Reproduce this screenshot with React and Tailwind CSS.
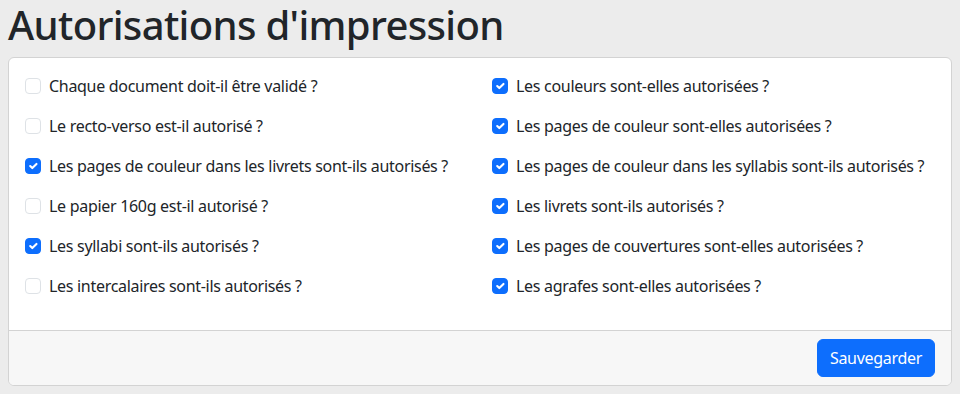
const leftItems = [
  { label: "Chaque document doit-il être validé ?", checked: false },
  { label: "Le recto-verso est-il autorisé ?", checked: false },
  { label: "Les pages de couleur dans les livrets sont-ils autorisés ?", checked: true },
  { label: "Le papier 160g est-il autorisé ?", checked: false },
  { label: "Les syllabi sont-ils autorisés ?", checked: true },
  { label: "Les intercalaires sont-ils autorisés ?", checked: false },
];

const rightItems = [
  { label: "Les couleurs sont-elles autorisées ?", checked: true },
  { label: "Les pages de couleur sont-elles autorisées ?", checked: true },
  { label: "Les pages de couleur dans les syllabis sont-ils autorisés ?", checked: true },
  { label: "Les livrets sont-ils autorisés ?", checked: true },
  { label: "Les pages de couvertures sont-elles autorisées ?", checked: true },
  { label: "Les agrafes sont-elles autorisées ?", checked: true },
];

// Bootstrap-looking checkbox row
const CheckRow = ({ label, checked }) => (
  <label className="flex items-start mb-4 leading-6 text-[16px] tracking-[-0.3px] text-[#212529] whitespace-nowrap">
    <span
      className={
        checked
          ? "mt-1 mr-2 w-4 h-4 shrink-0 rounded-[4px] bg-[#0d6efd] border border-[#0d6efd] flex items-center justify-center"
          : "mt-1 mr-2 w-4 h-4 shrink-0 rounded-[4px] bg-white border border-[#dee2e6]"
      }
    >
      {checked && (
        <svg viewBox="0 0 20 20" className="w-4 h-4">
          <path d="m6 10 3 3 6-6" fill="none" stroke="#fff" strokeWidth="3" strokeLinecap="round" strokeLinejoin="round" />
        </svg>
      )}
    </span>
    <span>{label}</span>
  </label>
);

export default function App() {
  return (
    <div className="min-h-screen bg-[#ececec] px-2 pt-px" style={{ fontFamily: '"Noto Sans", sans-serif' }}>
      {/* Title */}
      <h1 className="text-[40px] leading-[48px] font-medium tracking-[-0.65px] text-[#212529] mb-2">Autorisations d'impression</h1>

      {/* Settings card */}
      <div className="bg-white border border-[#d3d3d3] rounded-md overflow-hidden">
        <div className="p-4">
          <div className="grid grid-cols-2 gap-x-6">
            <div className="flex flex-col">
              {leftItems.map((it) => (
                <CheckRow key={it.label} {...it} />
              ))}
            </div>
            <div className="flex flex-col">
              {rightItems.map((it) => (
                <CheckRow key={it.label} {...it} />
              ))}
            </div>
          </div>
        </div>

        {/* Footer */}
        <div className="bg-[#f7f7f7] border-t border-[#d3d3d3] px-4 py-2 flex justify-end">
          <button className="bg-[#0d6efd] text-white text-[16px] leading-6 tracking-[-0.3px] px-3 py-[6px] rounded-md border border-[#0d6efd]">
            Sauvegarder
          </button>
        </div>
      </div>
    </div>
  );
}
